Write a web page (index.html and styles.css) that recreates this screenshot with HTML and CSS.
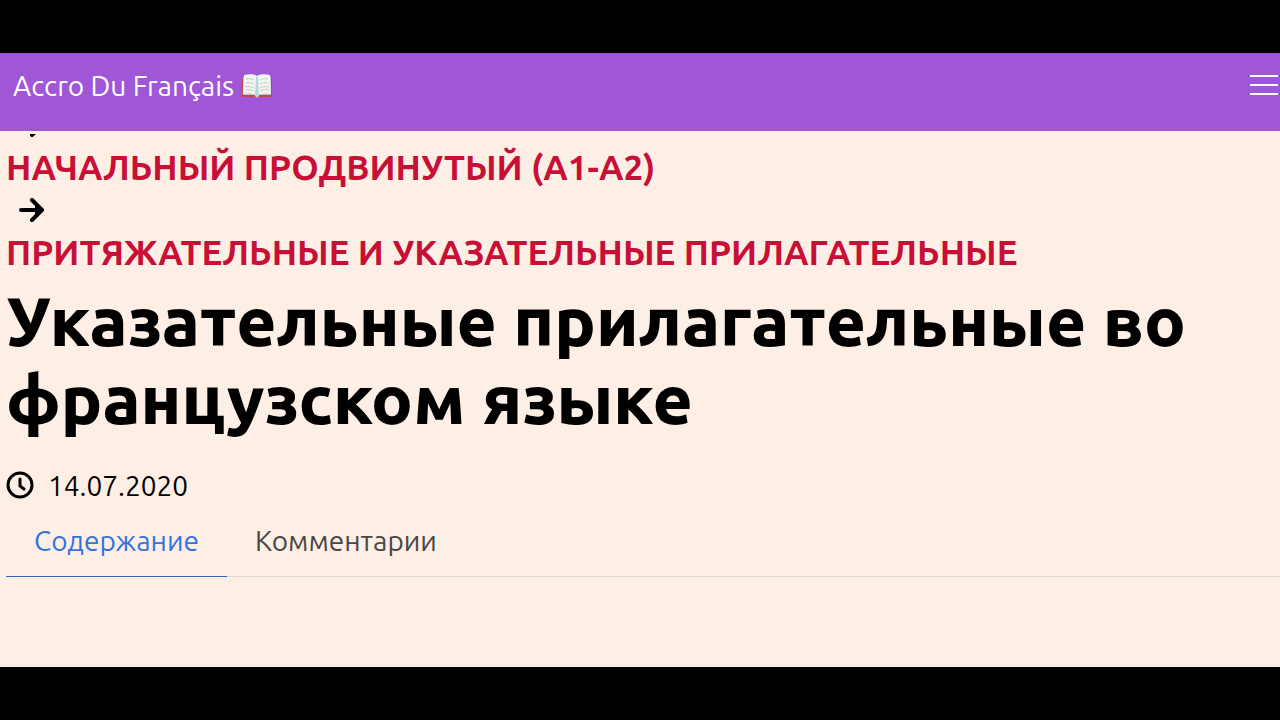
FILE: index.html
```html
<!DOCTYPE html>
<html lang="ru">
<head>
<meta charset="utf-8">
<meta name="viewport" content="width=device-width, initial-scale=1">
<title>Accro Du Français</title>
<link rel="stylesheet" href="styles.css">
</head>
<body>
<div class="screen">
  <header class="navbar">
    <a class="brand" href="#">Accro Du Français
      <svg class="book" viewBox="0 0 32 24" aria-hidden="true">
        <path fill="#c8414b" d="M1 4h30v19H18l-2 1-2-1H1z"/>
        <path fill="#b9c4c6" d="M2 3h28v18H2z"/>
        <path fill="#f1f5f2" d="M3 1c5-1 10-1 13 1 3-2 8-2 13-1l1 19c-6-1-10-1-14 2-4-3-8-3-14-2z"/>
        <path fill="#b4d6dd" d="M15 3h2l1 19-2 2-2-2z"/>
        <path fill="none" stroke="#c5ccc8" stroke-width="1" d="M5 5c3-1 6 0 8 1M5 9c3-1 6 0 8 1M4 13c4-1 7 0 9 1M4 16c4-1 7 0 9 1M27 5c-3-1-6 0-8 1M27 9c-3-1-6 0-8 1M28 13c-4-1-7 0-9 1M28 16c-4-1-7 0-9 1"/>
      </svg>
    </a>
    <button class="menu" type="button" aria-label="Меню">
      <span class="menu-line"></span><span class="menu-line"></span><span class="menu-line"></span>
    </button>
  </header>
  <main class="content">
    <ul class="crumbs">
      <li class="crumb-arrow">
        <svg class="arrow" viewBox="0 0 26 24" aria-hidden="true"><path d="M2 12h20M13 2l10 10-10 10"/><path class="arrow-tip" d="M16 7l8 5-8 5z"/></svg>
      </li>
      <li><a class="crumb" href="#">НАЧАЛЬНЫЙ ПРОДВИНУТЫЙ (A1-A2)</a></li>
      <li class="crumb-arrow">
        <svg class="arrow" viewBox="0 0 26 24" aria-hidden="true"><path d="M2 12h20M13 2l10 10-10 10"/><path class="arrow-tip" d="M16 7l8 5-8 5z"/></svg>
      </li>
      <li><a class="crumb" href="#">ПРИТЯЖАТЕЛЬНЫЕ И УКАЗАТЕЛЬНЫЕ ПРИЛАГАТЕЛЬНЫЕ</a></li>
    </ul>
    <h1 class="title">Указательные прилагательные во французском языке</h1>
    <p class="date">
      <svg class="clock" viewBox="0 0 28 28" aria-hidden="true"><circle cx="14" cy="13" r="12"/><path d="M14 7v7l4 3"/></svg>
      <time datetime="2020-07-14">14.07.2020</time>
    </p>
    <nav class="tabs">
      <a class="tab tab-active" href="#">Содержание</a>
      <a class="tab" href="#">Комментарии</a>
    </nav>
  </main>
</div>
</body>
</html>
```
FILE: styles.css
```css
* { box-sizing: border-box; }
body {
  margin: 0;
  min-height: 100vh;
  padding: 53px 0;
  display: flex;
  background: #000;
  color: #000;
  font-family: Ubuntu, "Noto Sans", sans-serif;
  font-size: 28px;
}
a { text-decoration: none; }
.screen {
  flex: 1;
  display: flex;
  flex-direction: column;
  background: #feefe6;
}
.navbar {
  display: flex;
  justify-content: space-between;
  align-items: flex-start;
  height: 78px;
  padding: 15px 2px 0 13px;
  background: #9f56d7;
}
.brand {
  display: flex;
  align-items: center;
  gap: 7px;
  color: #fff;
  line-height: 36px;
}
.book { width: 32px; height: 24px; }
.menu {
  display: flex;
  flex-direction: column;
  gap: 7px;
  width: 28px;
  margin-top: 7px;
  padding: 0;
  border: 0;
  background: none;
}
.menu-line { height: 2px; width: 100%; background: #fff; }
.content {
  flex: 1;
  margin-top: 3px;
  padding-left: 6px;
  overflow: hidden;
}
.crumbs {
  list-style: none;
  margin: -31px 0 0;
  padding: 0;
  font-size: 35px;
  font-weight: 700;
  line-height: 41px;
}
.crumb { color: #c80f35; }
.crumb-arrow {
  display: flex;
  align-items: center;
  height: 44px;
  padding-left: 13px;
}
.arrow {
  width: 26px;
  height: 24px;
  fill: none;
  stroke: #000;
  stroke-width: 4;
  stroke-linecap: round;
  stroke-linejoin: round;
}
.arrow-tip {
  fill: #000;
  stroke: none;
}
.title {
  margin: 9px 0 0;
  font-size: 69px;
  font-weight: 800;
  line-height: 78px;
}
.date {
  display: flex;
  align-items: center;
  gap: 14px;
  margin: 28px 0 0;
  line-height: 40px;
}
.clock {
  width: 28px;
  height: 28px;
  overflow: visible;
  fill: none;
  stroke: #000;
  stroke-width: 3;
  stroke-linecap: round;
}
.tabs {
  display: flex;
  border-bottom: 1px solid #dcd5d2;
}
.tab {
  margin-bottom: -1px;
  padding: 14px 28px;
  border-bottom: 1px solid transparent;
  color: #4a4644;
  line-height: 42px;
}
.tab-active {
  color: #3273dc;
  border-bottom-color: #3463c0;
}
```
